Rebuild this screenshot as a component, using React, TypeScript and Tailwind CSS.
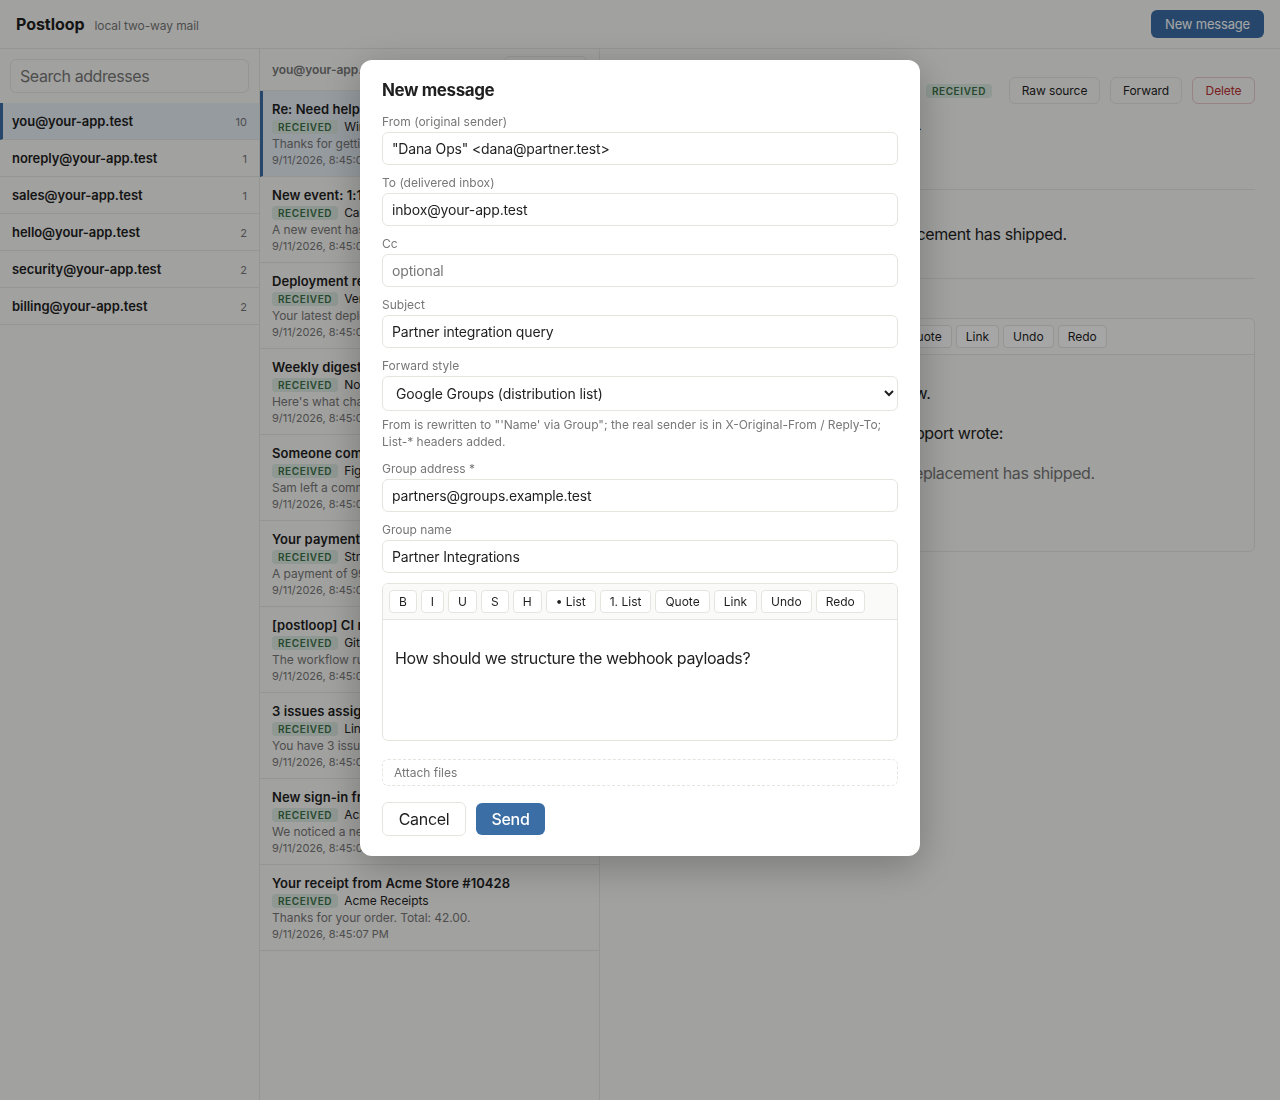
const addresses = [
  { email: "you@your-app.test", count: 10, active: true },
  { email: "noreply@your-app.test", count: 1 },
  { email: "sales@your-app.test", count: 1 },
  { email: "hello@your-app.test", count: 2 },
  { email: "security@your-app.test", count: 2 },
  { email: "billing@your-app.test", count: 2 },
];

const messages = [
  { subject: "Re: Need help with my order", from: "Wingate Support", preview: "Thanks for getting in touch with us.", time: "8:45:07 PM", active: true },
  { subject: "New event: 1:1 with Sam", from: "Cal.com", preview: "A new event has been scheduled.", time: "8:45:07 PM" },
  { subject: "Deployment ready", from: "Vercel", preview: "Your latest deployment is live.", time: "8:45:07 PM" },
  { subject: "Weekly digest", from: "Notion", preview: "Here's what changed this week.", time: "8:45:07 PM" },
  { subject: "Someone commented", from: "Figma", preview: "Sam left a comment on your file.", time: "8:45:07 PM" },
  { subject: "Your payment was received", from: "Stripe", preview: "A payment of 99.00 was received.", time: "8:45:07 PM" },
  { subject: "[postloop] CI run failed", from: "GitHub", preview: "The workflow run failed on main.", time: "8:45:07 PM" },
  { subject: "3 issues assigned to you", from: "Linear", preview: "You have 3 issues to review.", time: "8:45:07 PM" },
  { subject: "New sign-in from Chrome", from: "Acme Security", preview: "We noticed a new sign-in.", time: "8:45:07 PM" },
  { subject: "Your receipt from Acme Store #10428", from: "Acme Receipts", preview: "Thanks for your order. Total: 42.00.", time: "8:45:07 PM" },
];

const toolbarItems = ["B", "I", "U", "S", "H", "• List", "1. List", "Quote", "Link", "Undo", "Redo"];

function Badge() {
  return (
    <span className="block rounded-[4px] bg-[#dceae1] px-[6px] text-[10px] leading-[14px] font-semibold tracking-[0.06em] text-[#3a7048]">
      RECEIVED
    </span>
  );
}

function Toolbar() {
  return (
    <div className="flex h-[36px] items-center gap-[4px] border-b border-[#e5e5e0] bg-[#fafaf8] px-[6px]">
      {toolbarItems.map((item) => (
        <button
          key={item}
          className="h-[23px] rounded-[4px] border border-[#e5e5e0] bg-white px-[9px] text-[12px] leading-none text-[#1f1f1f]"
        >
          {item}
        </button>
      ))}
    </div>
  );
}

function Field({ label, value, placeholder }: { label: string; value?: string; placeholder?: string }) {
  return (
    <label className="mb-[10px] block">
      <span className="mb-[3px] block text-[12px] leading-[15px] text-[#777777]">{label}</span>
      <input
        readOnly
        value={value}
        placeholder={placeholder}
        className="block h-[33px] w-full rounded-[6px] border border-[#e5e5e0] bg-white px-[9px] text-[14px] tracking-[-0.16px] text-[#1f1f1f] outline-none placeholder:text-[#777777]"
      />
    </label>
  );
}

function Modal() {
  return (
    <div className="fixed inset-0 flex items-start justify-center bg-black/35 pt-[60px]">
      <div className="h-[796px] w-[560px] rounded-[12px] bg-white px-[22px] pt-[18px] shadow-[0_10px_40px_rgba(0,0,0,0.25)]">
        <h2 className="mb-[12px] text-[17px] leading-[24px] font-bold tracking-[-0.4px] text-[#1f1f1f]">New message</h2>
        <Field label="From (original sender)" value={'"Dana Ops" <dana@partner.test>'} />
        <Field label="To (delivered inbox)" value="inbox@your-app.test" />
        <Field label="Cc" placeholder="optional" />
        <Field label="Subject" value="Partner integration query" />

        <label className="block">
          <span className="mb-[3px] block text-[12px] leading-[15px] text-[#777777]">Forward style</span>
          <select className="block h-[35px] w-full rounded-[6px] border border-[#e5e5e0] bg-white px-[9px] text-[14px] tracking-[-0.11px] text-[#1f1f1f] outline-none">
            <option>Google Groups (distribution list)</option>
          </select>
        </label>
        <p className="mt-[5px] mb-[11px] text-[12px] leading-[17px] text-[#777777]">
          From is rewritten to "'Name' via Group"; the real sender is in X-Original-From / Reply-To; List-* headers added.
        </p>

        <Field label="Group address *" value="partners@groups.example.test" />
        <Field label="Group name" value="Partner Integrations" />

        <div className="h-[158px] overflow-hidden rounded-[6px] border border-[#e5e5e0] bg-white">
          <Toolbar />
          <div className="px-[12px] pt-[26px] text-[16px] leading-[24px] tracking-[-0.38px] text-[#1f1f1f]">
            How should we structure the webhook payloads?
          </div>
        </div>

        <div className="mt-[18px] flex h-[27px] items-center rounded-[6px] border border-dashed border-[#e5e5e0] px-[11px] text-[12px] text-[#777777]">
          Attach files
        </div>

        <div className="mt-[16px] flex items-center gap-[10px]">
          <button className="h-[34px] w-[84px] rounded-[6px] border border-[#e5e5e0] bg-white text-[16px] tracking-[-0.3px] text-[#1f1f1f]">
            Cancel
          </button>
          <button className="h-[32px] w-[69px] rounded-[6px] bg-[#3b6ea5] text-[16px] font-medium tracking-[-0.3px] text-white">
            Send
          </button>
        </div>
      </div>
    </div>
  );
}

export default function App() {
  return (
    <div className="flex h-[1100px] flex-col overflow-hidden bg-[#f7f7f5] font-['Inter',sans-serif] text-[#1f1f1f]">
      {/* Top bar */}
      <header className="flex h-[49px] shrink-0 items-center justify-between border-b border-[#e5e5e0] bg-[#f7f7f5] px-[16px]">
        <div className="flex items-baseline gap-[10px]">
          <span className="text-[16px] font-bold tracking-[-0.05px]">Postloop</span>
          <span className="text-[12px] tracking-[-0.1px] text-[#777777]">local two-way mail</span>
        </div>
        <button className="h-[28px] w-[113px] rounded-[6px] bg-[#3b6ea5] pt-[1px] text-[13px] tracking-[-0.2px] text-white">
          New message
        </button>
      </header>

      <div className="flex min-h-0 flex-1">
        {/* Address column */}
        <aside className="w-[260px] shrink-0 border-r border-[#e5e5e0]">
          <div className="h-[54px] px-[10px] pt-[10px]">
            <input
              readOnly
              placeholder="Search addresses"
              className="block h-[34px] w-full rounded-[6px] border border-[#e5e5e0] bg-transparent px-[9px] text-[16px] tracking-[-0.42px] outline-none placeholder:text-[#777777]"
            />
          </div>
          {addresses.map((a) => (
            <div
              key={a.email}
              className={
                a.active
                  ? "flex h-[37px] items-center justify-between border-b border-[#e5e5e0] border-l-[3px] border-l-[#3b6ea5] bg-[#e6eef6] pt-[2px] pr-[12px] pl-[9px]"
                  : "flex h-[37px] items-center justify-between border-b border-[#e5e5e0] px-[12px] pt-[2px]"
              }
            >
              <span className="text-[13px] font-semibold tracking-[-0.05px]">{a.email}</span>
              <span className="text-[11px] text-[#777777]">{a.count}</span>
            </div>
          ))}
        </aside>

        {/* Message column */}
        <section className="w-[340px] shrink-0 border-r border-[#e5e5e0]">
          <div className="flex h-[42px] items-center justify-between border-b border-[#e5e5e0] px-[12px]">
            <span className="text-[12px] font-semibold tracking-[-0.05px] text-[#777777]">you@your-app.test</span>
            <button className="h-[27px] w-[83px] rounded-[6px] border border-[#e5e5e0] text-[12px]">
              Delete all
            </button>
          </div>
          {messages.map((m) => (
            <div
              key={m.subject}
              className={
                m.active
                  ? "h-[86px] border-b border-[#e5e5e0] border-l-[3px] border-l-[#3b6ea5] bg-[#e6eef6] pt-[10px] pr-[12px] pl-[9px]"
                  : "h-[86px] border-b border-[#e5e5e0] px-[12px] pt-[10px]"
              }
            >
              <div className="text-[13px] leading-[17px] font-semibold tracking-[0.06px]">{m.subject}</div>
              <div className="flex h-[17px] items-center gap-[6px] text-[12px] tracking-[-0.02px]">
                <Badge />
                <span>{m.from}</span>
              </div>
              <div className="pt-[1px] text-[12px] leading-[16px] tracking-[-0.05px] text-[#777777]">{m.preview}</div>
              <div className="text-[11px] leading-[17px] text-[#777777]">9/11/2026, {m.time}</div>
            </div>
          ))}
        </section>

        {/* Message detail */}
        <main className="min-w-0 flex-1 px-[24px] pt-[28px] pr-[25px]">
          <div className="flex h-[27px] items-center justify-end gap-[10px]">
            <span className="mr-[7px]"><Badge /></span>
            <button className="h-[27px] w-[91px] rounded-[6px] border border-[#e5e5e0] text-[12px] tracking-[-0.08px]">Raw source</button>
            <button className="h-[27px] w-[72px] rounded-[6px] border border-[#e5e5e0] text-[12px] tracking-[-0.08px]">Forward</button>
            <button className="h-[27px] w-[63px] rounded-[6px] border border-[#e8c9c9] text-[12px] tracking-[-0.08px] text-[#b83232]">Delete</button>
          </div>
          <div className="h-[86px] border-b border-[#e5e5e0] pt-[17px] text-[13px] leading-[17px]">
            From: Wingate Support &lt;support@wingate.test&gt;
          </div>
          <div className="h-[89px] border-b border-[#e5e5e0] pt-[32px] text-[16px] leading-[24px] tracking-[-0.38px]">
            Hi, thanks for getting in touch. Your replacement has shipped.
          </div>
          <div className="mt-[39px] h-[234px] overflow-hidden rounded-[6px] border border-[#e5e5e0]">
            <Toolbar />
            <div className="px-[12px] pt-[26px] text-[16px] leading-[24px] tracking-[-0.38px]">
              <p className="mb-[16px] tracking-[-0.31px]">Thanks, I will confirm delivery tomorrow.</p>
              <p className="mb-[16px]">On 9/11/2026, 8:45:07 PM, Wingate Support wrote:</p>
              <blockquote className="border-l-2 border-[#e5e5e0] pl-[13px] text-[#777777]">
                Hi, thanks for getting in touch. Your replacement has shipped.
              </blockquote>
            </div>
          </div>
        </main>
      </div>

      <Modal />
    </div>
  );
}
